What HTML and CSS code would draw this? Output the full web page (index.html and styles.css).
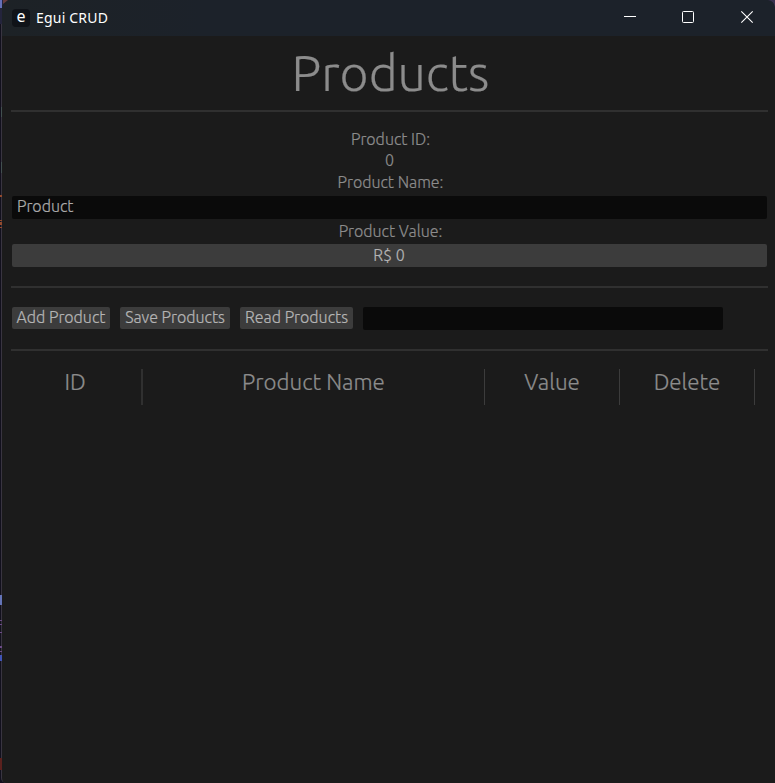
FILE: index.html
```html
<!DOCTYPE html>
<html lang="en">
<head>
<meta charset="utf-8">
<title>Egui CRUD</title>
<link rel="stylesheet" href="styles.css">
</head>
<body>
<div class="window">
  <header class="titlebar">
    <span class="app-icon">e</span>
    <span class="app-title">Egui CRUD</span>
    <svg class="controls" width="175" height="36" viewBox="0 0 175 36" fill="none" stroke="#fff">
      <path d="M24 16.5h12"/>
      <rect x="82.5" y="11.5" width="11" height="11" rx="1"/>
      <path d="M141.3 11.3l11.4 11.4M152.7 11.3l-11.4 11.4" stroke-width="1.1"/>
    </svg>
  </header>
  <main class="panel">
    <h1>Products</h1>
    <hr>
    <section class="form">
      <div class="label">Product ID:</div>
      <div class="label number">0</div>
      <div class="label name-label">Product Name:</div>
      <div class="field">Product</div>
      <div class="label value-label">Product Value:</div>
      <div class="drag">R$ 0</div>
    </section>
    <hr>
    <div class="actions">
      <button class="add">Add Product</button>
      <button class="save">Save Products</button>
      <button class="read">Read Products</button>
      <div class="path"></div>
    </div>
    <hr>
    <div class="table-head">
      <div class="col-id">ID</div>
      <div class="col-name">Product Name</div>
      <div>Value</div>
      <div>Delete</div>
    </div>
  </main>
</div>
<svg class="backdrop" width="775" height="783" fill="none">
  <path d="M0 0h8Q2 1 2 8V24H0z" fill="#24243c"/>
  <path d="M0 0h2v8H0z" fill="#6670b8"/>
  <path d="M3 0h5L3 4z" fill="#693c3c"/>
  <path d="M768 0h7v7Q774 1 768 0z" fill="#39314f"/>
  <path d="M1 107h1v10H1zM1 162h1v11H1z" fill="#425050"/>
  <path d="M0 195h2v2H0zM0 220h2v1H0zM0 222h2v3H0zM0 227h2v1H0z" fill="#924a2d"/>
  <path d="M0 595h2v10H0z" fill="#6474b7"/>
  <path d="M0 620h2v1H0zM0 624h2v1H0zM0 632h2v1H0zM0 646h2v2H0zM0 651h2v1H0z" fill="#6c4b86"/>
  <path d="M0 655h2v6H0z" fill="#4054b6"/>
  <path d="M0 758h2v12H0z" fill="#5b211e"/>
</svg>
</body>
</html>
```

FILE: styles.css
```css
* { box-sizing: border-box; }
body {
  margin: 0;
  width: 775px;
  height: 783px;
  overflow: hidden;
  background: #12101d;
  font: 300 16px/22px "Ubuntu", "Noto Sans", sans-serif;
  -webkit-text-stroke: 0.2px currentColor;
  color: #8c8c8c;
}
.window {
  height: 783px;
  margin-left: 1px;
  border-left: 1px solid #393541;
  border-radius: 8px 0 0 5px;
  overflow: hidden;
  background: #1b1b1b;
}
.titlebar {
  height: 36px;
  display: flex;
  align-items: center;
  padding-left: 10px;
  background: linear-gradient(90deg, #1d2226, #1c222a 200px);
  color: #fff;
  -webkit-text-stroke: 0;
}
.app-icon {
  width: 18px;
  height: 18px;
  border-radius: 4px;
  background: #101318;
  margin-right: 6px;
  font: 16px/15px "Noto Sans", sans-serif;
  text-align: center;
}
.app-title { font: 14px/20px "Noto Sans", sans-serif; letter-spacing: 0.2px; }
.controls { margin-left: auto; }
.backdrop { position: absolute; left: 0; top: 0; pointer-events: none; }
.panel { padding: 0 7px 0 9px; }
h1 {
  margin: 0;
  height: 74px;
  padding-left: 2px;
  font-size: 50px;
  line-height: 72px;
  font-weight: 300;
  text-align: center;
}
hr { height: 2px; margin: 0; border: 0; background: #303030; }
.form { height: 174px; padding: 16px 1px 0; text-align: center; }
.label { height: 22px; padding-left: 2px; }
.number { height: 21px; line-height: 21px; padding-left: 0; }
.name-label { height: 25px; }
.field {
  height: 23px;
  padding-left: 5px;
  border-radius: 2px;
  background: #0a0a0a;
  color: #aaa;
  line-height: 21px;
  text-align: left;
}
.value-label { height: 25px; line-height: 24px; }
.drag {
  height: 23px;
  padding-right: 1px;
  border-radius: 2px;
  background: #3c3c3c;
  color: #b4b4b4;
}
.actions { height: 61px; padding: 19px 1px 0; display: flex; gap: 10px; }
button {
  height: 22px;
  padding: 0 0 2px;
  border: 0;
  border-radius: 2px;
  background: #3c3c3c;
  color: #b4b4b4;
  font: inherit;
  line-height: 20px;
  white-space: nowrap;
}
.add { width: 98px; }
.save { width: 110px; }
.read { width: 113px; }
.path { width: 360px; height: 23px; border-radius: 2px; background: #0a0a0a; }
.table-head {
  height: 54px;
  padding-top: 18px;
  display: grid;
  grid-template-columns: 132px 342px 135px 135px;
  font-size: 22.4px;
  line-height: 26px;
  text-align: center;
}
.table-head div { border-right: 1px solid #3c3c3c; }
.table-head .col-id { padding-right: 2px; border-right: 2px solid #303030; }
```
